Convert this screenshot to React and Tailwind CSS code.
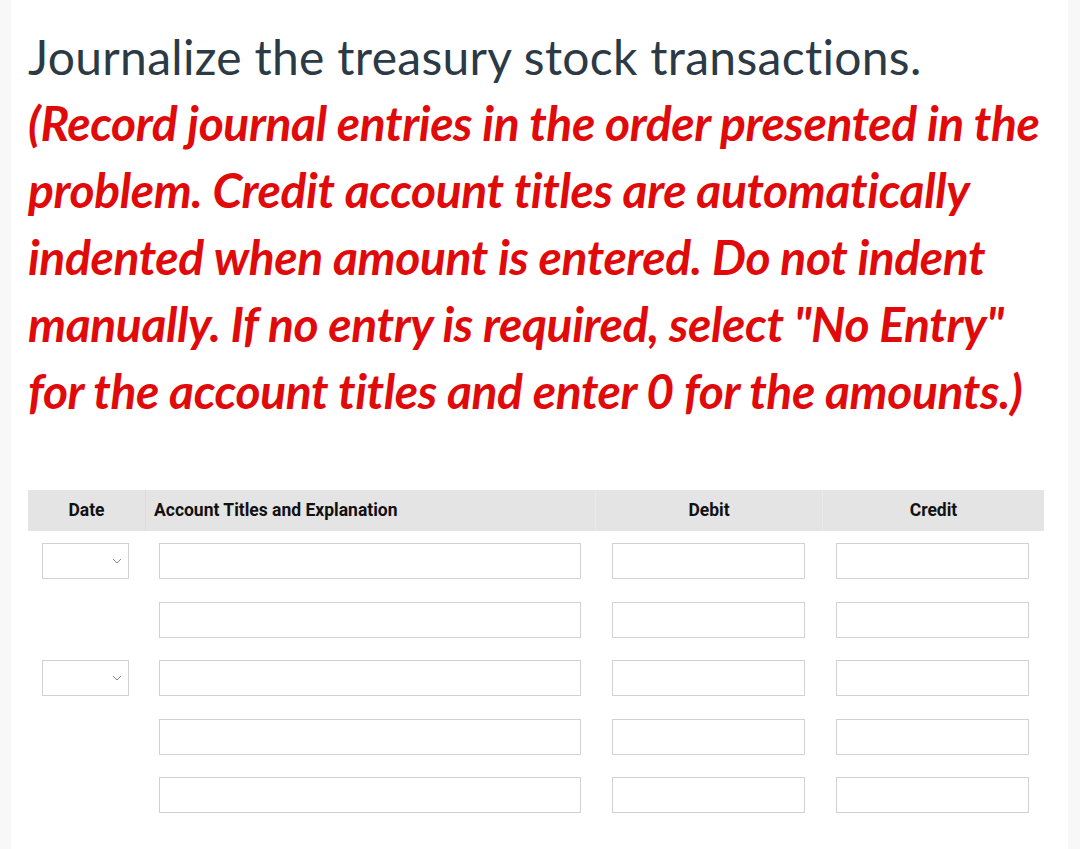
import React from "react";

function Chevron() {
  return (
    <svg width="10" height="6" viewBox="0 0 10 6" className="absolute right-[6px] top-1/2 -translate-y-1/2">
      <path d="M1 1 L5 5 L9 1" fill="none" stroke="#8a8a8a" strokeWidth="1" />
    </svg>
  );
}

function Box({ className = "" }) {
  return <div className={"h-[36px] border border-[#d2d2d2] bg-white " + className} />;
}

function Row({ date }) {
  return (
    <div className="grid grid-cols-[117px_450px_227px_222px] w-[1016px] h-[58.5px] items-center">
      <div className="pl-[14px]">
        {date ? (
          <div className="relative w-[87px] h-[36px] border border-[#d2d2d2] bg-white">
            <Chevron />
          </div>
        ) : null}
      </div>
      <div className="pl-[14px] pr-[14px]">
        <Box />
      </div>
      <div className="pl-[17px] pr-[17px]">
        <Box />
      </div>
      <div className="pl-[14px] pr-[15px]">
        <Box />
      </div>
    </div>
  );
}

export default function App() {
  const lato = { fontFamily: "Lato, 'Open Sans', sans-serif" };
  return (
    <div className="w-[1080px] h-[849px] flex bg-white overflow-hidden">
      <div className="w-[11px] bg-[#f8f8f8] shrink-0" />
      <div className="flex-1 pl-[17px] pt-[24px]">
        <h1 className="text-[48px] leading-[65px] text-[#2c3a45] font-normal tracking-[0.3px] whitespace-nowrap" style={lato}>
          Journalize the treasury stock transactions.
        </h1>
        <p className="text-[48px] leading-[67px] font-bold italic text-[#e00a0a] tracking-[-0.4px] whitespace-nowrap" style={lato}>
          (Record journal entries in the order presented in the<br />
          problem. Credit account titles are automatically<br />
          indented when amount is entered. Do not indent<br />
          manually. If no entry is required, select "No Entry"<br />
          for the account titles and enter 0 for the amounts.)
        </p>
        <div className="mt-[66px]" style={{ fontFamily: "Roboto, sans-serif" }}>
          <div className="grid grid-cols-[117px_450px_227px_222px] w-[1016px] h-[41px] bg-[#e4e4e4] text-[17.5px] font-bold text-[#111] items-stretch">
            <div className="flex items-center justify-center">Date</div>
            <div className="flex items-center pl-[8px] border-l border-[#dcdcdc]">Account Titles and Explanation</div>
            <div className="flex items-center justify-center border-l border-[#eaeaea]">Debit</div>
            <div className="flex items-center justify-center border-l border-[#eaeaea]">Credit</div>
          </div>
          <div className="pt-[1px]">
            <Row date />
            <Row />
            <Row date />
            <Row />
            <Row />
          </div>
        </div>
      </div>
      <div className="w-[12px] bg-[#f8f8f8] shrink-0" />
    </div>
  );
}
